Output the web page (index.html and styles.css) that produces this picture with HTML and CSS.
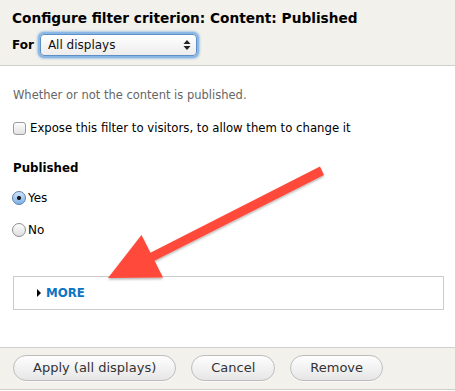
FILE: index.html
```html
<!DOCTYPE html>
<html lang="en">
<head>
    <meta charset="UTF-8">
    <title>Configure filter criterion</title>
    <link rel="stylesheet" href="styles.css">
</head>
<body>
    <div class="dialog">
        <div class="dialog-header">
            <h1>Configure filter criterion: Content: Published</h1>
            <div class="for-row">
                <label for="displaySelect">For</label>
                <div class="select-wrap">
                    <select id="displaySelect" class="select">
                        <option>All displays</option>
                        <option>This page (override)</option>
                    </select>
                    <svg class="select-arrows" width="8" height="12" viewBox="0 0 8 12">
                        <path d="M4 1 L7.5 5 L0.5 5 Z M4 11 L7.5 7 L0.5 7 Z" fill="#222"/>
                    </svg>
                </div>
            </div>
        </div>

        <div class="dialog-body">
            <p class="description">Whether or not the content is published.</p>

            <label class="check-row">
                <input type="checkbox" class="checkbox">
                <span>Expose this filter to visitors, to allow them to change it</span>
            </label>

            <div class="field-title">Published</div>
            <label class="radio-row">
                <input type="radio" name="published" class="radio" checked>
                <span>Yes</span>
            </label>
            <label class="radio-row">
                <input type="radio" name="published" class="radio">
                <span>No</span>
            </label>

            <div class="details">
                <span class="details-toggle"></span>
                <a href="#" class="details-link">MORE</a>
            </div>
        </div>

        <div class="dialog-footer">
            <button class="btn">Apply (all displays)</button>
            <button class="btn">Cancel</button>
            <button class="btn">Remove</button>
        </div>

        <!-- annotation arrow drawn on top of the dialog -->
        <svg class="arrow" width="455" height="391" viewBox="0 0 455 391">
            <defs>
                <filter id="shadow" x="-10%" y="-10%" width="120%" height="130%">
                    <feDropShadow dx="0" dy="1.5" stdDeviation="1.2" flood-color="#000" flood-opacity="0.3"/>
                </filter>
            </defs>
            <g filter="url(#shadow)" fill="#ff4a3b">
                <path d="M320 166.5 L324 175 L150 263 L146 255 Z"/>
                <path d="M141.5 235 L163 277.5 L108 278 Z"/>
            </g>
        </svg>
    </div>
</body>
</html>
```

FILE: styles.css
```css
* {
    box-sizing: border-box;
}
body {
    margin: 0;
    background: #fff;
    font-family: 'DejaVu Sans', 'Liberation Sans', Arial, sans-serif;
    color: #000;
}
.dialog {
    position: relative;
    width: 455px;
    height: 391px;
    overflow: hidden;
}
.dialog-header {
    height: 66px;
    background: #f2f1ec;
    border-bottom: 1px solid #cfcfcb;
    padding: 9px 12px 0;
}
.dialog-header h1 {
    margin: 0;
    font-size: 13.7px;
    font-weight: bold;
    line-height: 18px;
}
.for-row {
    display: flex;
    align-items: center;
    gap: 6px;
    margin-top: 7px;
}
.for-row label {
    font-size: 12px;
    font-weight: bold;
}
.select-wrap {
    position: relative;
    width: 157px;
    height: 22px;
}
.select {
    -webkit-appearance: none;
    appearance: none;
    width: 100%;
    height: 100%;
    margin: 0;
    padding: 0 20px 0 7px;
    font-family: inherit;
    font-size: 12px;
    color: #111;
    background: linear-gradient(#ffffff, #ececec);
    border: 1px solid #5d8fc4;
    border-radius: 4px;
    box-shadow: 0 0 0 2px #8ab8e6, 0 0 2px 3px rgba(90, 150, 215, 0.45);
    outline: none;
}
.select-arrows {
    position: absolute;
    right: 6px;
    top: 5px;
    pointer-events: none;
}
.dialog-body {
    padding: 0 11px 0 13px;
    height: 281px;
}
.description {
    margin: 0;
    padding-top: 22px;
    font-size: 11.5px;
    line-height: 14px;
    color: #666;
}
.check-row {
    display: flex;
    align-items: center;
    gap: 4px;
    margin-top: 18px;
    font-size: 11.7px;
    line-height: 16px;
}
.checkbox {
    -webkit-appearance: none;
    appearance: none;
    width: 13px;
    height: 13px;
    margin: 0;
    border: 1px solid #9a9a9a;
    border-radius: 3px;
    background: linear-gradient(#fdfdfd, #e2e2e2);
    box-shadow: inset 0 1px 1px rgba(255, 255, 255, 0.8);
}
.field-title {
    margin-top: 24px;
    font-size: 11.8px;
    font-weight: bold;
    line-height: 16px;
}
.radio-row {
    display: flex;
    align-items: center;
    gap: 2px;
    margin-top: 14px;
    font-size: 12px;
    line-height: 16px;
}
.radio-row + .radio-row {
    margin-top: 16px;
}
.radio {
    -webkit-appearance: none;
    appearance: none;
    width: 14px;
    height: 14px;
    margin: 0 0 0 -1px;
    border: 1px solid #8e8e8e;
    border-radius: 50%;
    background: linear-gradient(#fdfdfd, #dedede);
}
.radio:checked {
    border-color: #5a7fab;
    background: radial-gradient(circle, #1a1a1a 0 1.8px, transparent 2.3px),
                linear-gradient(#cfe4fb, #7fb1e8);
}
.details {
    display: flex;
    align-items: center;
    margin-top: 38px;
    height: 34px;
    border: 1px solid #cccccc;
    padding-left: 23px;
}
.details-toggle {
    width: 0;
    height: 0;
    border-top: 4px solid transparent;
    border-bottom: 4px solid transparent;
    border-left: 4px solid #000;
    margin-right: 5px;
}
.details-link {
    color: #0b74c4;
    font-size: 11.8px;
    font-weight: bold;
    text-decoration: none;
}
.dialog-footer {
    height: 43px;
    background: #f2f1ec;
    border-top: 1px solid #cfcfcb;
    border-bottom: 1px solid #cfcfcb;
    display: flex;
    align-items: center;
    gap: 15px;
    padding: 0 13px 2px;
}
.btn {
    height: 26px;
    padding: 0 19px;
    font-family: inherit;
    font-size: 13px;
    color: #333;
    background: linear-gradient(#fefefe, #e6e6e6);
    border: 1px solid #bdbdbd;
    border-radius: 13px;
    box-shadow: 0 1px 0 rgba(255, 255, 255, 0.6);
}
.arrow {
    position: absolute;
    left: 0;
    top: 0;
    pointer-events: none;
}
```
